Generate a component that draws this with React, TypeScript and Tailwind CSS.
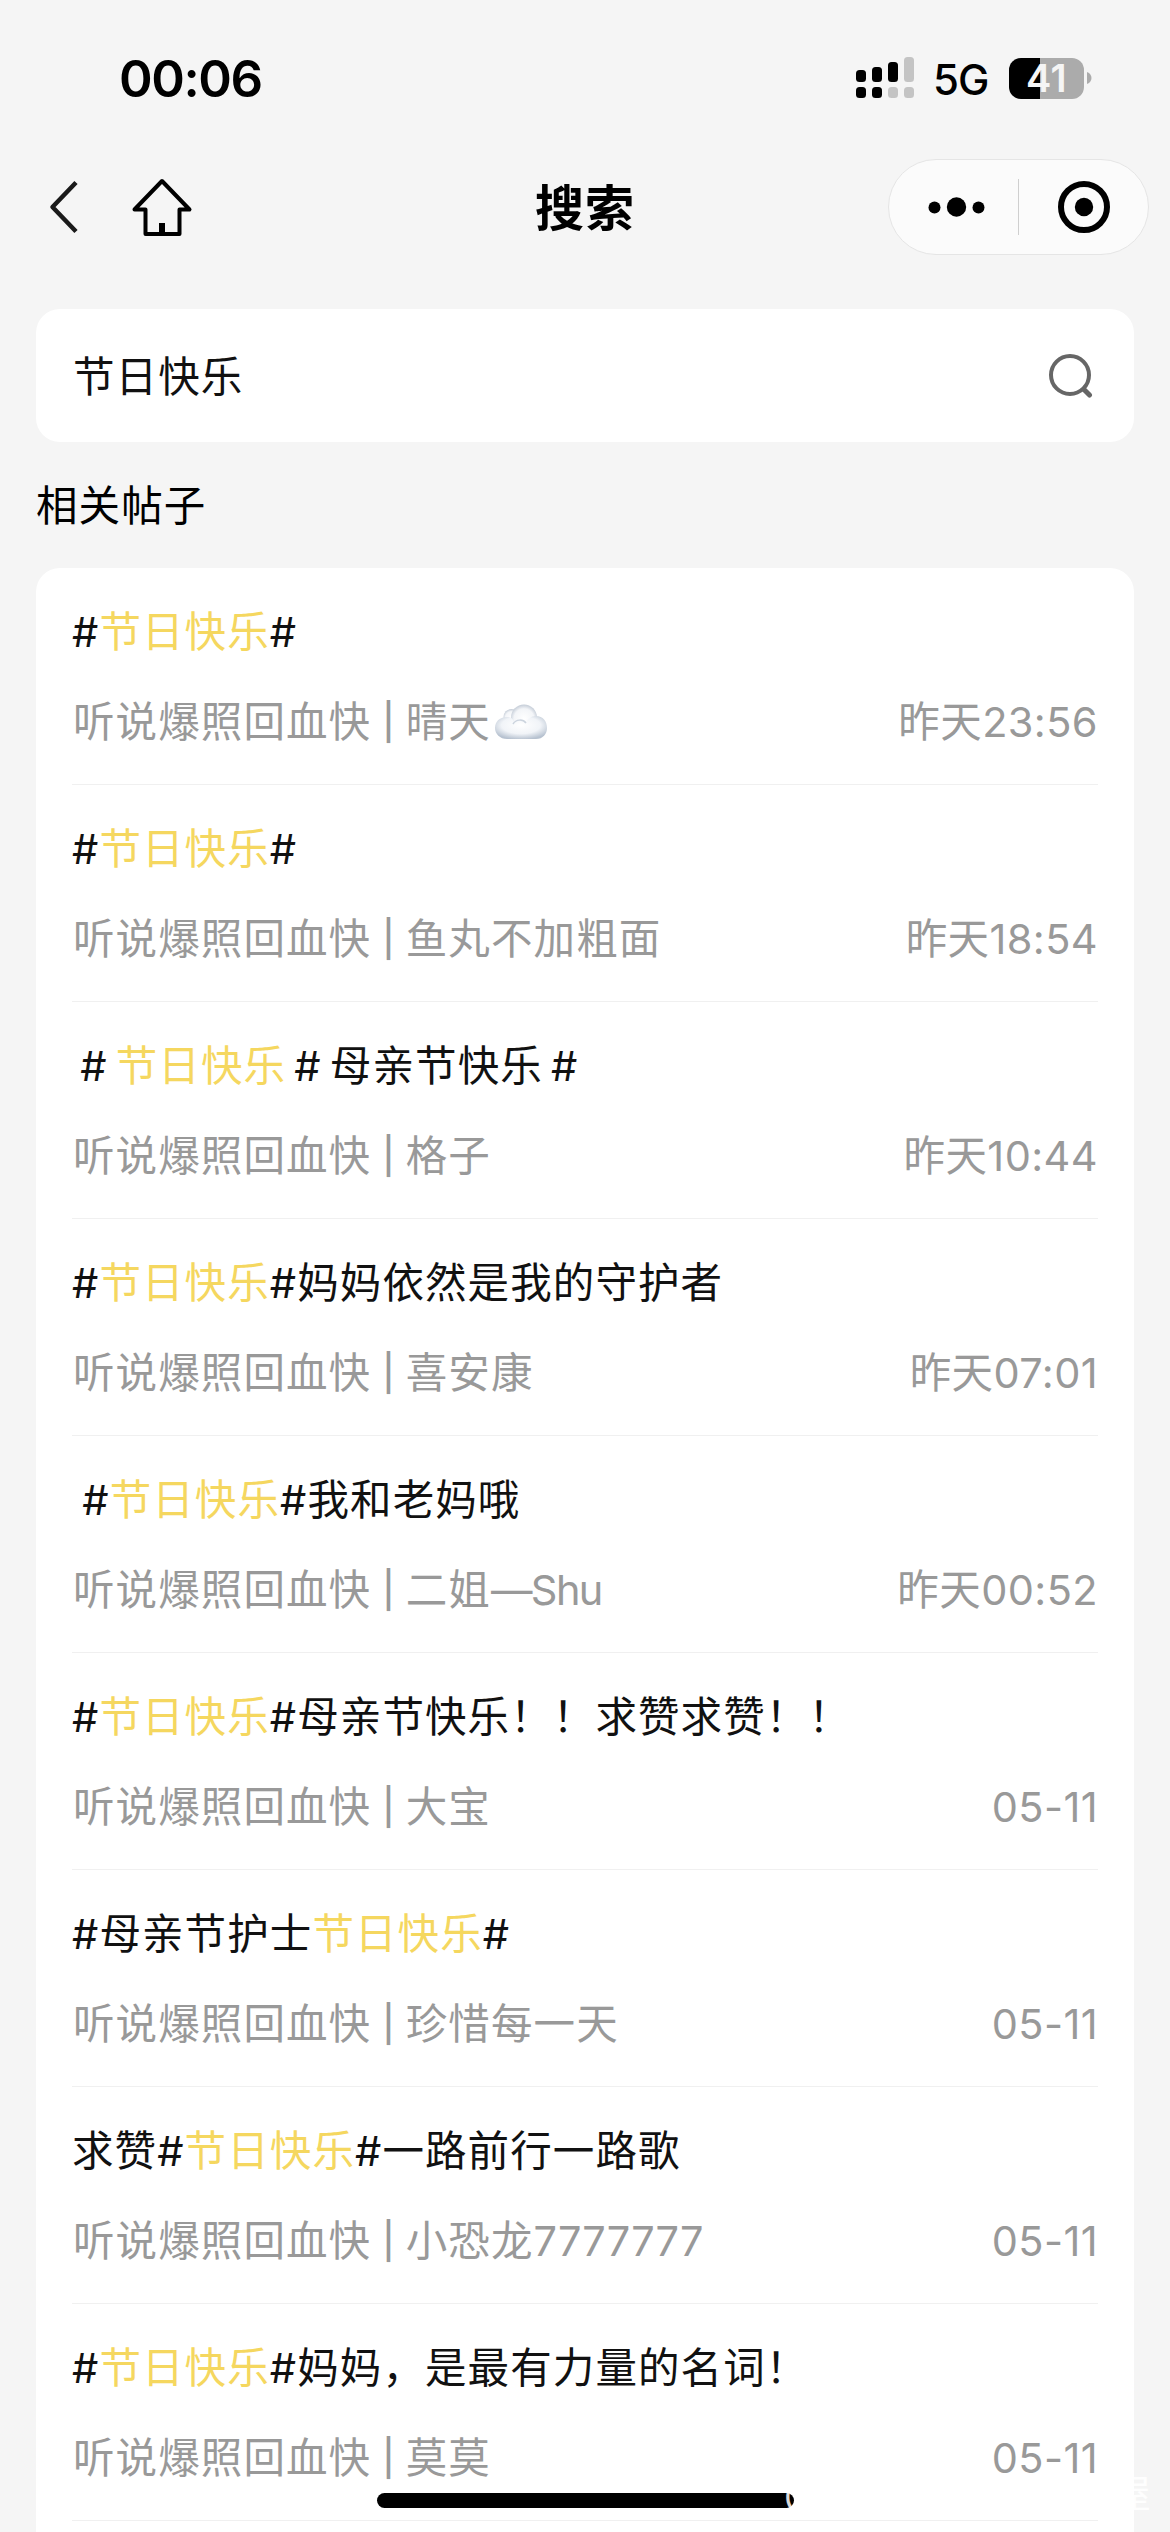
import type { ReactNode } from "react";

type Post = {
  title: string;
  author: string;
  time: string;
  cloud?: boolean;
  thinSpaces?: boolean;
};

const KEYWORD = "节日快乐";

const posts: Post[] = [
  { title: "#[节日快乐]#", author: "晴天", time: "昨天23:56", cloud: true },
  { title: "#[节日快乐]#", author: "鱼丸不加粗面", time: "昨天18:54" },
  { title: " # [节日快乐] # 母亲节快乐 #", author: "格子", time: "昨天10:44", thinSpaces: true },
  { title: "#[节日快乐]#妈妈依然是我的守护者", author: "喜安康", time: "昨天07:01" },
  { title: " #[节日快乐]#我和老妈哦", author: "二姐—Shu", time: "昨天00:52" },
  { title: "#[节日快乐]#母亲节快乐！！求赞求赞！！", author: "大宝", time: "05-11" },
  { title: "#母亲节护士[节日快乐]#", author: "珍惜每一天", time: "05-11" },
  { title: "求赞#[节日快乐]#一路前行一路歌", author: "小恐龙7777777", time: "05-11" },
  { title: "#[节日快乐]#妈妈，是最有力量的名词！", author: "莫莫", time: "05-11" },
];

// [..] marks the part of the title that matched the search
function highlight(title: string): ReactNode[] {
  return title.split(/[[\]]/).map((part, i) =>
    i % 2 === 1 ? (
      <span key={i} className="text-[#f5d75f]">{part}</span>
    ) : (
      <span key={i}>{part}</span>
    )
  );
}

// latin letters and digits sit tighter than the chinese characters
function authorName(name: string): ReactNode[] {
  return name.split(/([—A-Za-z]+|\d+)/).map((part, i) => {
    if (/^\d/.test(part)) return <span key={i} className="tracking-[0.1px]">{part}</span>;
    if (/^[—A-Za-z]/.test(part)) return <span key={i} className="tracking-[-1.6px]">{part}</span>;
    return <span key={i}>{part}</span>;
  });
}

function StatusBar() {
  return (
    <div className="flex h-[156px] items-center justify-between pr-[78px] pl-[119px]">
      <span className="text-[51px] leading-none font-semibold tracking-[-1.4px] text-black">00:06</span>
      <div className="flex items-center">
        <svg width="58" height="42" viewBox="0 0 58 42">
          <rect x="0" y="13" width="10" height="12" rx="3.5" />
          <rect x="16" y="10" width="10" height="15" rx="3.5" />
          <rect x="32" y="5" width="10" height="20" rx="3.5" />
          <rect x="48" y="0" width="10" height="25" rx="3.5" fill="#c4c4c4" />
          <rect x="0" y="30" width="10" height="11" rx="3.5" />
          <rect x="16" y="30" width="10" height="11" rx="3.5" />
          <rect x="32" y="30" width="10" height="11" rx="3.5" fill="#c4c4c4" />
          <rect x="48" y="30" width="10" height="11" rx="3.5" fill="#c4c4c4" />
        </svg>
        <span className="ml-[19px] w-[56px] pt-[3px] text-[42px] leading-none font-medium tracking-[-1px] text-black">5G</span>
        <div className="ml-[20px] flex h-[41px] w-[75px] items-center justify-center rounded-[12px] bg-[linear-gradient(90deg,#000_42%,#ababab_42%)] text-[38px] leading-none font-semibold tracking-[0.5px] text-[#f5f5f5]">
          41
        </div>
        <svg className="ml-[3px]" width="5" height="12" viewBox="0 0 5 12">
          <path d="M0 0C6 2 6 10 0 12Z" fill="#ababab" />
        </svg>
      </div>
    </div>
  );
}

function NavBar() {
  return (
    <div className="grid h-[102px] grid-cols-[1fr_auto_1fr] items-center px-[21px]">
      <div className="ml-[26px] flex items-center">
        <svg width="34" height="56" viewBox="0 0 34 56" fill="none" stroke="#1a1a1a" strokeWidth="4.5" strokeLinejoin="round">
          <path d="M29 3.5L5.5 28L29 52.5" />
        </svg>
        <svg className="ml-[50px]" width="62" height="60" viewBox="0 0 62 60" fill="none" stroke="#000" strokeWidth="4" strokeLinejoin="round">
          <path d="M31 4L58.500 32.500H48.500V57H14.500V32.500H3.500Z" />
          <path d="M31 46V57" strokeWidth="6" />
        </svg>
      </div>
      <h1 className="pt-[3px] text-[49px] leading-none font-bold text-black">搜索</h1>
      <div className="flex h-[96px] w-[261px] items-center justify-self-end rounded-full border border-[#e5e5e5] bg-[#fbfbfb]">
        <svg width="129" height="40" viewBox="0 0 129 40">
          <circle cx="45.500" cy="20.500" r="6" />
          <circle cx="67.500" cy="20" r="9.700" />
          <circle cx="89.500" cy="20.500" r="6" />
        </svg>
        <div className="h-[56px] w-px bg-[#cfcfcf]" />
        <svg className="ml-[38px]" width="54" height="54" viewBox="0 0 54 54">
          <circle cx="27" cy="27" r="23" fill="none" stroke="#000" strokeWidth="6" />
          <circle cx="27" cy="27" r="9.200" />
        </svg>
      </div>
    </div>
  );
}

function Cloud() {
  return (
    <svg className="ml-[3px]" width="54" height="38" viewBox="0 0 54 38">
      <defs>
        <radialGradient id="puff" cx="50%" cy="55%" r="55%">
          <stop offset="0" stopColor="#ffffff" />
          <stop offset="0.7" stopColor="#f3f5f8" />
          <stop offset="1" stopColor="#c3cbd6" />
        </radialGradient>
        <radialGradient id="base" cx="50%" cy="40%" r="62%">
          <stop offset="0" stopColor="#ffffff" />
          <stop offset="0.6" stopColor="#f1f4f8" />
          <stop offset="1" stopColor="#b7c2d0" />
        </radialGradient>
      </defs>
      <circle cx="17.500" cy="14" r="8" fill="url(#puff)" />
      <circle cx="30" cy="14.500" r="13" fill="url(#puff)" />
      <path d="M13 14C5 14 1 19 1 25C1 31 6 36 13 36H42C49 36 53 31 53 25C53 18 49 13 42 13C37 13 34 16 32 19C28 15 22 15 20 19C19 16 17 14 13 14Z" fill="url(#base)" />
      <path d="M19 21C22 16 29 16 32 20" fill="none" stroke="#ccd4de" strokeWidth="1.500" />
    </svg>
  );
}

function PostRow({ post }: { post: Post }) {
  return (
    <li className="h-[217px] border-b border-[#f0f0f0] pt-[34px]">
      <p className={`h-[60px] whitespace-pre text-[#111] ${post.thinSpaces ? "[word-spacing:-4.6px]" : "[word-spacing:-2.5px]"}`}>
        {highlight(post.title)}
      </p>
      <div className="mt-[30px] flex h-[60px] justify-between text-[#999]">
        <div className="flex items-center pl-px">
          <span>听说爆照回血快</span>
          <span className="mr-[10px] ml-[11px] text-[36px] font-medium">|</span>
          <span>{authorName(post.author)}</span>
          {post.cloud && <Cloud />}
        </div>
        <span className="tracking-[0.4px]">{post.time}</span>
      </div>
    </li>
  );
}

export default function App() {
  return (
    <div className="relative h-[2532px] w-[1170px] overflow-hidden bg-[#f5f5f5] font-[Inter,'Noto_Sans_CJK_SC',sans-serif] text-[41.500px] leading-[60px] tracking-[1.100px]">
      <StatusBar />
      <NavBar />

      <div className="mx-[36px] mt-[51px] flex h-[133px] items-center justify-between rounded-[24px] bg-white pr-[41px] pl-[37px]">
        <span className="pt-[2px] text-[#111]">{KEYWORD}</span>
        <svg width="46" height="46" viewBox="0 0 46 46" fill="none" stroke="#666" strokeWidth="4" strokeLinecap="round">
          <circle cx="23" cy="22" r="19" />
          <path d="M37.500 37L42.500 42" strokeWidth="5" />
        </svg>
      </div>

      <h2 className="mt-[34px] ml-[36px] h-[60px] text-black">相关帖子</h2>

      <ul className="mx-[36px] mt-[32px] rounded-t-[24px] bg-white px-[36px]">
        {posts.map((post) => (
          <PostRow key={post.title + post.author} post={post} />
        ))}
        <li className="h-[20px]" />
      </ul>

      {/* home indicator */}
      <div className="absolute bottom-[24px] left-[377px] h-[15px] w-[417px] rounded-full bg-black" />

      {/* watermark, white on white except at its two ends */}
      <div className="absolute right-[19px] bottom-[18px] flex h-[42px] w-[367px] items-center justify-between text-[38px] leading-none tracking-normal whitespace-nowrap text-white/85">
        <span>@力力制</span>
        <span>in</span>
        <span>暖日小屋</span>
      </div>
    </div>
  );
}
